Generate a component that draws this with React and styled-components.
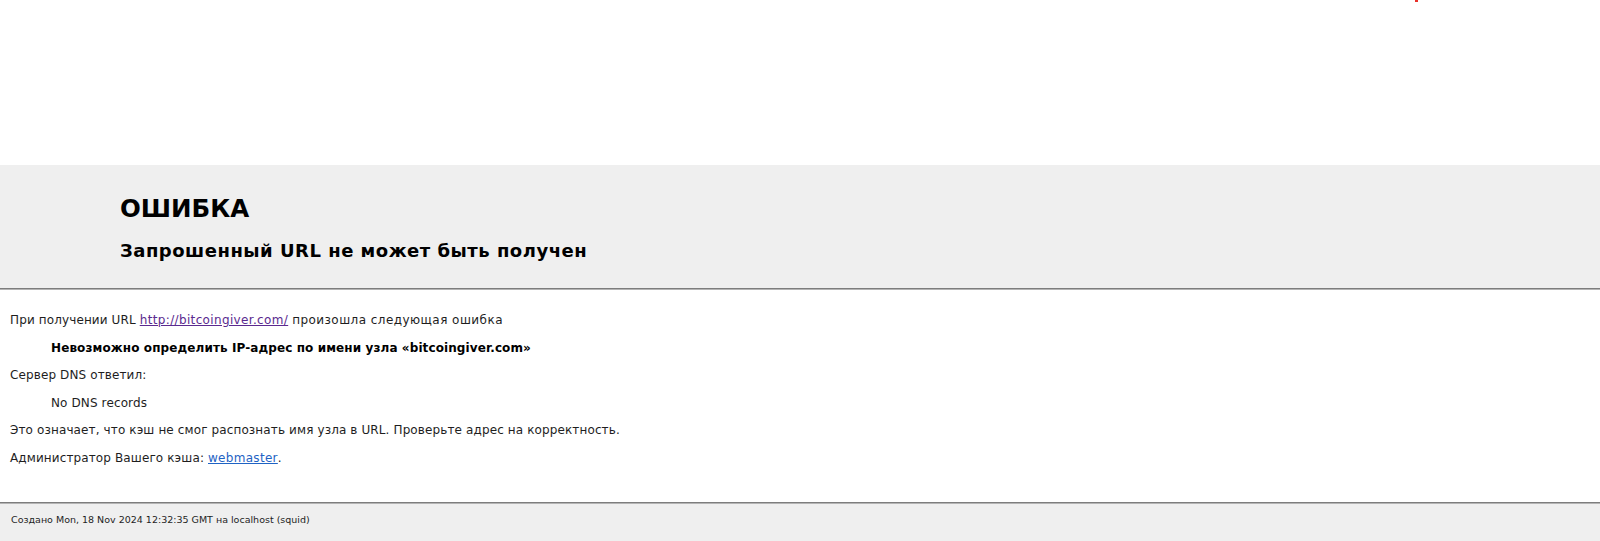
import React from "react";
import styled, { createGlobalStyle } from "styled-components";

const GlobalStyle = createGlobalStyle`
  html, body {
    margin: 0;
    padding: 0;
    background: #efefef;
    font-family: "DejaVu Sans", Verdana, sans-serif;
    font-size: 12px;
    color: #1e1e1e;
  }
`;

const Page = styled.div`
  display: flex;
  flex-direction: column;
  min-height: 541px;
`;

const TopArea = styled.div`
  height: 165px;
  background: #ffffff;
  display: flex;
  align-items: flex-start;
`;

const Speck = styled.span`
  width: 3px;
  height: 2px;
  margin-left: 1415px;
  background: #e8302a;
`;

const Titles = styled.div`
  background: #efefef;
  padding: 29px 0 27px 120px;
`;

const Title = styled.h1`
  margin: 0;
  font-size: 24.5px;
  font-weight: bold;
  color: #000;
`;

const Subtitle = styled.h2`
  margin: 17px 0 0;
  font-size: 18px;
  letter-spacing: 0.5px;
  font-weight: bold;
  color: #000;
`;

const Rule = styled.hr`
  margin: 0;
  height: 0;
  border: 0;
  border-top: 1px solid #7d7d7d;
  border-bottom: 1px solid #b4b4b4;
`;

const Content = styled.div`
  background: #ffffff;
  padding: 11px 10px 24px;
`;

const Para = styled.p`
  margin: 12px 0;
  line-height: 15.5px;
  letter-spacing: 0.12px;
`;

const Quote = styled.blockquote`
  margin: 0 0 0 41px;
`;

const Strong = styled.b`
  letter-spacing: 0.1px;
  color: #000;
`;

const Tail = styled.span`
  letter-spacing: 0.45px;
`;

const Link = styled.a`
  color: ${(p) => (p.$visited ? "#5b2a8f" : "#1f63c4")};
  letter-spacing: ${(p) => (p.$visited ? "0.35px" : "0.3px")};
  text-decoration: underline;
`;

const Footer = styled.div`
  flex: 1;
  background: #efefef;
  padding: 10px 11px;
  font-size: 9.5px;
  line-height: 11px;
`;

export default function App() {
  return (
    <>
      <GlobalStyle />
      <Page>
        <TopArea>
          <Speck />
        </TopArea>
        <Titles>
          <Title>ОШИБКА</Title>
          <Subtitle>Запрошенный URL не может быть получен</Subtitle>
        </Titles>
        <Rule />
        <Content>
          <Para>
            При получении URL{" "}
            <Link $visited href="#">http://bitcoingiver.com/</Link>{" "}
            <Tail>произошла следующая ошибка</Tail>
          </Para>
          <Quote>
            <Para>
              <Strong>Невозможно определить IP-адрес по имени узла «bitcoingiver.com»</Strong>
            </Para>
          </Quote>
          <Para>Сервер DNS ответил:</Para>
          <Quote>
            <Para>No DNS records</Para>
          </Quote>
          <Para>
            Это означает, что кэш не смог распознать имя узла в URL. Проверьте адрес на корректность.
          </Para>
          <Para>
            Администратор Вашего кэша: <Link href="#">webmaster</Link>.
          </Para>
        </Content>
        <Rule />
        <Footer>Создано Mon, 18 Nov 2024 12:32:35 GMT на localhost (squid)</Footer>
      </Page>
    </>
  );
}
